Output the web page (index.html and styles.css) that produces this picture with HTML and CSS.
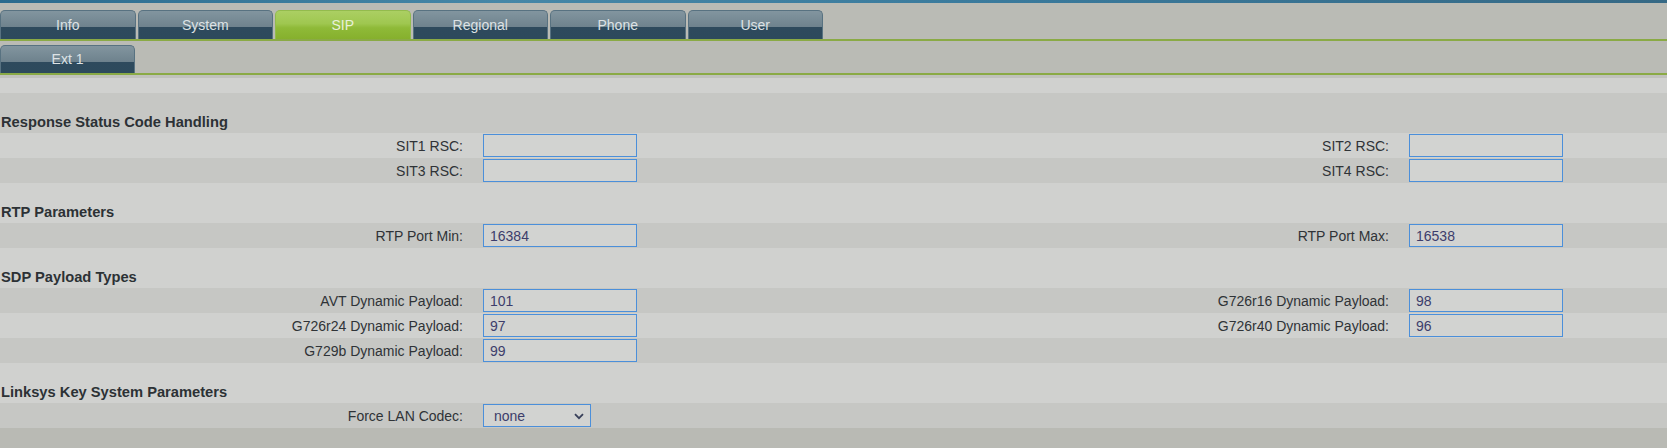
FILE: index.html
```html
<!DOCTYPE html>
<html>
<head>
<meta charset="utf-8">
<title>SIP</title>
<link rel="stylesheet" href="styles.css">
</head>
<body>
<div class="topbar"></div>
<nav class="tabs main-tabs">
  <a class="tab">Info</a>
  <a class="tab">System</a>
  <a class="tab active">SIP</a>
  <a class="tab">Regional</a>
  <a class="tab">Phone</a>
  <a class="tab">User</a>
</nav>
<nav class="tabs sub-tabs">
  <a class="tab">Ext 1</a>
</nav>
<div class="gapband"></div>
<div class="form">
  <div class="band"></div>

  <div class="row head"><h3>Response Status Code Handling</h3></div>
  <div class="row">
    <label class="label">SIT1 RSC:</label><div class="field"><input class="inp" type="text" value=""></div>
    <label class="label">SIT2 RSC:</label><div class="field"><input class="inp" type="text" value=""></div>
  </div>
  <div class="row">
    <label class="label">SIT3 RSC:</label><div class="field"><input class="inp" type="text" value=""></div>
    <label class="label">SIT4 RSC:</label><div class="field"><input class="inp" type="text" value=""></div>
  </div>

  <div class="row head"><h3>RTP Parameters</h3></div>
  <div class="row">
    <label class="label">RTP Port Min:</label><div class="field"><input class="inp" type="text" value="16384"></div>
    <label class="label">RTP Port Max:</label><div class="field"><input class="inp" type="text" value="16538"></div>
  </div>

  <div class="row head"><h3>SDP Payload Types</h3></div>
  <div class="row">
    <label class="label">AVT Dynamic Payload:</label><div class="field"><input class="inp" type="text" value="101"></div>
    <label class="label">G726r16 Dynamic Payload:</label><div class="field"><input class="inp" type="text" value="98"></div>
  </div>
  <div class="row">
    <label class="label">G726r24 Dynamic Payload:</label><div class="field"><input class="inp" type="text" value="97"></div>
    <label class="label">G726r40 Dynamic Payload:</label><div class="field"><input class="inp" type="text" value="96"></div>
  </div>
  <div class="row">
    <label class="label">G729b Dynamic Payload:</label><div class="field"><input class="inp" type="text" value="99"></div>
    <span class="label"></span><span class="field"></span>
  </div>

  <div class="row head"><h3>Linksys Key System Parameters</h3></div>
  <div class="row">
    <label class="label">Force LAN Codec:</label>
    <div class="field">
      <div class="selwrap">
        <select class="sel"><option>none</option><option>G711u</option><option>G711a</option></select>
        <svg class="chev" width="10" height="7" viewBox="0 0 10 7"><path d="M1 1.2 L5 5.2 L9 1.2" fill="none" stroke="#39405a" stroke-width="1.8"/></svg>
      </div>
    </div>
    <span class="label"></span><span class="field"></span>
  </div>
</div>
</body>
</html>
```

FILE: styles.css
```css
html, body {
  margin: 0;
  padding: 0;
}
body {
  background: #b9bab4;
  font-family: "Liberation Sans", Arial, sans-serif;
  font-size: 14px;
  color: #2f3337;
  height: 448px;
  overflow: hidden;
}
.topbar {
  height: 3px;
  background: linear-gradient(90deg, #2b6b8e 0%, #4687a7 30%, #3a7a9c 60%, #366985 100%);
}
.tabs {
  display: flex;
  gap: 2px;
  background: #babbb5;
  border-bottom: 2px solid #8aaa45;
}
.main-tabs {
  padding-top: 7px;
}
.sub-tabs {
  padding-top: 4px;
}
.tab {
  width: 135.5px;
  height: 29px;
  box-sizing: border-box;
  display: flex;
  align-items: center;
  justify-content: center;
  border: 1px solid #587281;
  border-bottom: none;
  border-radius: 5px 5px 0 0;
  background: linear-gradient(#82959f 0%, #6e828d 58%, #2e4a5d 58%, #2d4a5c 100%);
  color: #dde2e5;
  font-size: 14px;
  padding-bottom: 1px;
}
.sub-tabs .tab {
  height: 28px;
  width: 135px;
}
.tab.active {
  border-color: #93bb4d;
  background: linear-gradient(#abcf63 0%, #9fc750 45%, #8fba38 60%, #86b02d 100%);
  color: #e9f1da;
}
.gapband {
  height: 3px;
  background: #c0c1bc;
}
.form {
  display: flex;
  flex-direction: column;
}
.band {
  height: 15px;
}
.form > :nth-child(odd) {
  background: #d0d1cf;
}
.form > :nth-child(even) {
  background: #c6c7c4;
}
.row {
  display: grid;
  grid-template-columns: 483px 443px 483px 1fr;
  align-items: center;
  height: 25px;
}
.row.head {
  display: flex;
  align-items: flex-end;
  height: 40px;
  box-sizing: border-box;
  padding-bottom: 2px;
}
.head h3 {
  margin: 0;
  padding-left: 1px;
  font-size: 14.7px;
  line-height: 17px;
  font-weight: bold;
  color: #2c3135;
}
.label {
  text-align: right;
  padding-right: 20px;
  color: #2f3337;
  font-size: 14px;
  line-height: 16px;
}
.field {
  display: flex;
  align-items: center;
}
.inp {
  width: 154px;
  height: 23px;
  box-sizing: border-box;
  margin: 0;
  border: 1px solid #4b8fda;
  border-radius: 0;
  background: #d2d3d1;
  padding: 0 6px;
  font-family: "Liberation Sans", Arial, sans-serif;
  font-size: 14px;
  color: #3d3d6b;
  outline: none;
}
.selwrap {
  position: relative;
  width: 108px;
  height: 23px;
}
.sel {
  appearance: none;
  -webkit-appearance: none;
  width: 108px;
  height: 23px;
  box-sizing: border-box;
  margin: 0;
  border: 1px solid #4b8fda;
  border-radius: 0;
  background: #d2d3d1;
  padding: 0 0 0 10px;
  font-family: "Liberation Sans", Arial, sans-serif;
  font-size: 14px;
  color: #3d3d6b;
  outline: none;
}
.chev {
  position: absolute;
  left: 91px;
  top: 9px;
  pointer-events: none;
}
```
